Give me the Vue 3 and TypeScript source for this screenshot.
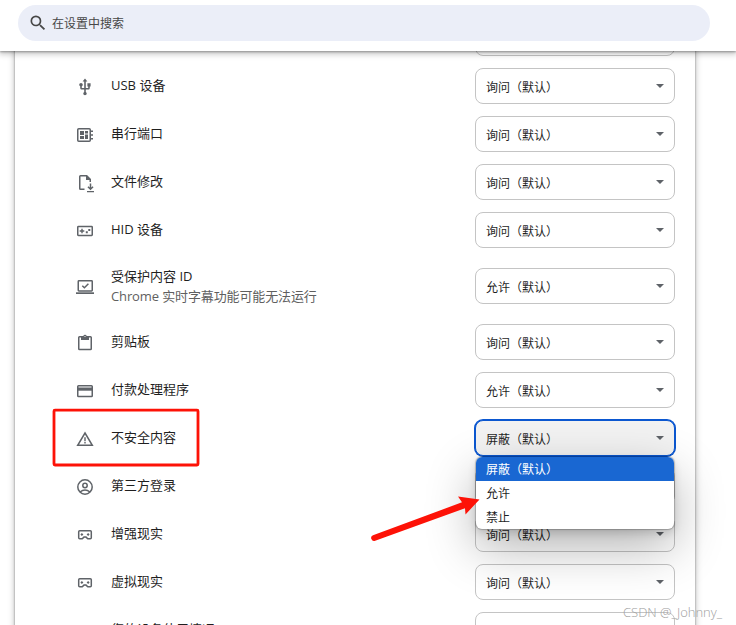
<script setup lang="ts">
interface SettingRow {
  icon: string
  label: string
  sub?: string
  value: string
  open?: boolean
}

const ask = '询问（默认）'
const allow = '允许（默认）'

const rows: SettingRow[] = [
  { icon: '', label: '', value: '' },
  { icon: 'usb', label: 'USB 设备', value: ask },
  { icon: 'serial', label: '串行端口', value: ask },
  { icon: 'file', label: '文件修改', value: ask },
  { icon: 'hid', label: 'HID 设备', value: ask },
  { icon: 'protected', label: '受保护内容 ID', sub: 'Chrome 实时字幕功能可能无法运行', value: allow },
  { icon: 'clipboard', label: '剪贴板', value: ask },
  { icon: 'payment', label: '付款处理程序', value: allow },
  { icon: 'warning', label: '不安全内容', value: '屏蔽（默认）', open: true },
  { icon: 'account', label: '第三方登录', value: ask },
  { icon: 'vr', label: '增强现实', value: ask },
  { icon: 'vr', label: '虚拟现实', value: ask },
  { icon: '', label: '您的设备使用情况', value: '' },
]

const options: string[] = ['屏蔽（默认）', '允许', '禁止']
</script>

<template>
  <div class="page">
    <header class="toolbar">
      <div class="search">
        <svg class="search-icon" viewBox="0 0 24 24">
          <path d="M15.5 14h-.79l-.28-.27A6.47 6.47 0 0 0 16 9.5 6.5 6.5 0 1 0 9.5 16c1.61 0 3.09-.59 4.23-1.57l.27.28v.79l5 4.99L20.49 19l-4.99-5zm-6 0C7.01 14 5 11.99 5 9.5S7.01 5 9.5 5 14 7.01 14 9.5 11.99 14 9.5 14z" />
        </svg>
        <span>在设置中搜索</span>
      </div>
    </header>
    <main class="viewport">
      <section class="card">
        <div v-for="(row, i) in rows" :key="i" class="row" :class="{ tall: row.sub }">
          <svg class="icon" viewBox="0 0 20 20">
            <path v-if="row.icon === 'usb'" transform="translate(.4 .6) scale(.8)" d="M15 7v4h1v2h-3V5h2l-3-4-3 4h2v8H8v-2.07c.7-.37 1.2-1.08 1.2-1.93 0-1.21-.99-2.2-2.2-2.2S4.8 7.79 4.8 9c0 .85.5 1.56 1.2 1.93V13c0 1.11.89 2 2 2h3v3.05c-.71.37-1.2 1.1-1.2 1.95a2.2 2.2 0 0 0 4.4 0c0-.85-.49-1.58-1.2-1.95V15h3c1.11 0 2-.89 2-2v-2h1V7h-4z" />
            <template v-else-if="row.icon === 'serial'">
              <rect class="line" x="2.75" y="3.75" width="12.5" height="12.5" rx="1" />
              <path d="M5 6h4v4H5zM10 6h3v2.5h-3zM5 11h4v3H5zM10 9.5h3V14h-3zM16 5.5h2V7h-2zM16 9.25h2v1.5h-2zM16 13h2v1.5h-2z" />
            </template>
            <template v-else-if="row.icon === 'file'">
              <path class="line" d="M9.5 16.25h-4q-.75 0-.75-.75v-12q0-.75.75-.75h6l3.75 3.75V9" />
              <path d="M11 2v5h5v-.8L11.8 2zM14.75 10.5h1.5v4l1.3-1.2 1 1-3.05 3.05-3.05-3.05 1-1 1.3 1.2zM12 18h7v1.3h-7z" />
            </template>
            <template v-else-if="row.icon === 'hid'">
              <rect class="line" x="2.75" y="5.5" width="14.5" height="9" rx=".7" />
              <path d="M6.3 7.7h1.4v1.6h1.6v1.4H7.7v1.6H6.3v-1.6H4.7V9.3h1.6zM10.8 10.3h2v2h-2zM13.3 7.9h2v2h-2z" />
            </template>
            <template v-else-if="row.icon === 'protected'">
              <rect class="line" x="3.25" y="3.75" width="14" height="10.3" rx=".7" />
              <path class="line" d="M7.3 8.7l2.1 2.1 4-4" />
              <path d="M1 15.3h18V17H1z" />
            </template>
            <template v-else-if="row.icon === 'clipboard'">
              <rect class="line" x="3.75" y="3.75" width="12.5" height="12.8" rx=".8" />
              <path d="M6 3h2.3a1.8 1.8 0 0 1 3.4 0H14v4H6z" />
              <circle class="hole" cx="10" cy="3.5" r=".6" />
            </template>
            <template v-else-if="row.icon === 'payment'">
              <rect class="line" x="2.75" y="4.75" width="14.5" height="10.8" rx=".8" />
              <path d="M2.5 6.5h15v3.2h-15z" />
            </template>
            <template v-else-if="row.icon === 'warning'">
              <path class="line" d="M10 4l7.3 12.25H2.7z" />
              <path d="M9.3 8.2h1.4v4H9.3zM9.3 13h1.4v1.5H9.3z" />
            </template>
            <template v-else-if="row.icon === 'account'">
              <circle class="line" cx="10" cy="10" r="7.2" />
              <circle class="line" cx="10" cy="8.5" r="2.2" />
              <path class="line" d="M5 15q5-4 10 0" />
            </template>
            <template v-else-if="row.icon === 'vr'">
              <path class="line" d="M4.7 5.75h10.6q1 0 1 1v6q0 1-1 1h-2.5L11 12.1H9l-1.8 1.65H4.7q-1 0-1-1v-6q0-1 1-1z" />
              <path d="M6.9 8l1.5 1.5L6.9 11 5.4 9.5zM13.1 8l1.5 1.5-1.5 1.5-1.5-1.5z" />
            </template>
          </svg>
          <div class="text">
            <div class="label">{{ row.label }}</div>
            <div v-if="row.sub" class="sub">{{ row.sub }}</div>
          </div>
          <div class="select" :class="{ focused: row.open }">
            <span>{{ row.value }}</span>
            <i class="caret"></i>
            <ul v-if="row.open" class="menu">
              <li v-for="(option, n) in options" :key="option" :class="{ active: n === 0 }">{{ option }}</li>
            </ul>
          </div>
        </div>
      </section>
    </main>
    <svg class="marks" viewBox="0 0 736 625">
      <rect x="54" y="410.2" width="144" height="54.8" rx="1" />
      <path d="M373 535.3L462 502.3 458 496.5 479.5 499.5 465.5 514.5 465 508.3 375.2 540.7A2.8 2.8 0 0 1 373 535.3z" />
    </svg>
    <div class="watermark">CSDN @_Johnny_</div>
  </div>
</template>

<style>
body {
  margin: 0;
  overflow: hidden;
}
</style>

<style scoped>
.page {
  position: relative;
  display: flex;
  flex-direction: column;
  width: 736px;
  height: 625px;
  overflow: hidden;
  background: #fff;
  color: #1f1f1f;
  font: 13px/20px "Open Sans", "Noto Sans CJK SC", sans-serif;
}
.toolbar {
  position: relative;
  z-index: 2;
  box-sizing: border-box;
  height: 51px;
  flex: none;
  padding: 5px 26px 0 18px;
  background: #fff;
  box-shadow: 0 1px 2px rgba(0, 0, 0, 0.3), 0 2px 6px 1px rgba(0, 0, 0, 0.24);
}
.search {
  display: flex;
  align-items: center;
  height: 36px;
  border-radius: 18px;
  padding-left: 10px;
  gap: 4px;
  background: #ebeef8;
  color: #474747;
  font-size: 12px;
}
.search span {
  padding-top: 1px;
}
.search-icon {
  width: 20px;
  height: 20px;
  fill: #474747;
}
.viewport {
  flex: 1;
  min-height: 0;
  overflow: hidden;
}
.card {
  width: 680px;
  height: 700px;
  margin: -37px 0 0 15px;
  background: #fff;
  box-shadow: 0 0 2px rgba(0, 0, 0, 0.4), 0 1px 6px 1px rgba(0, 0, 0, 0.22);
}
.row {
  display: flex;
  align-items: center;
  box-sizing: border-box;
  height: 48px;
  padding: 0 20px 0 60px;
}
.row.tall {
  height: 64px;
}
.icon {
  width: 20px;
  height: 20px;
  margin-top: 2px;
  flex: none;
  fill: #5f6368;
}
.line {
  fill: none;
  stroke: #5f6368;
  stroke-width: 1.5;
}
.hole {
  fill: #fff;
}
.text {
  flex: 1;
  padding: 0 0 2px 16px;
  white-space: nowrap;
}
.tall .text {
  padding-bottom: 0;
}
.sub {
  color: #5f5f5f;
  letter-spacing: -0.12px;
}
.select {
  position: relative;
  display: flex;
  align-items: center;
  justify-content: space-between;
  box-sizing: border-box;
  width: 200px;
  height: 36px;
  padding: 3px 10px 0;
  border: 1px solid #c4c4c4;
  border-radius: 8px;
  font-size: 12px;
}
.select.focused {
  z-index: 1;
  background: #f2f2f2;
  border-color: #0b57d0;
  box-shadow: 0 0 0 1px #0b57d0;
}
.caret {
  margin-top: -4px;
  border: 4px solid transparent;
  border-top-color: #5f6368;
  border-bottom: 0;
}
.menu {
  position: absolute;
  top: 36px;
  left: 0;
  width: 198px;
  margin: 0;
  padding: 0;
  overflow: hidden;
  list-style: none;
  background: #fff;
  border-radius: 6px;
  box-shadow: 0 0 1px 1px rgba(0, 0, 0, 0.22), 0 4px 8px rgba(0, 0, 0, 0.14), 0 18px 50px rgba(0, 0, 0, 0.3);
}
.menu li {
  height: 24px;
  padding-left: 10px;
  line-height: 25px;
}
.menu .active {
  background: #1967d2;
  color: #fff;
}
.marks {
  position: absolute;
  z-index: 3;
  inset: 0;
  width: 736px;
  height: 625px;
  fill: #fd1207;
}
.marks rect {
  fill: none;
  stroke: #fd1207;
  stroke-width: 2.8;
}
.watermark {
  position: absolute;
  z-index: 4;
  left: 623px;
  top: 602px;
  color: #a0a0a0;
  font-family: "Open Sans", "Noto Sans", sans-serif;
  font-weight: 300;
  white-space: nowrap;
}
</style>
